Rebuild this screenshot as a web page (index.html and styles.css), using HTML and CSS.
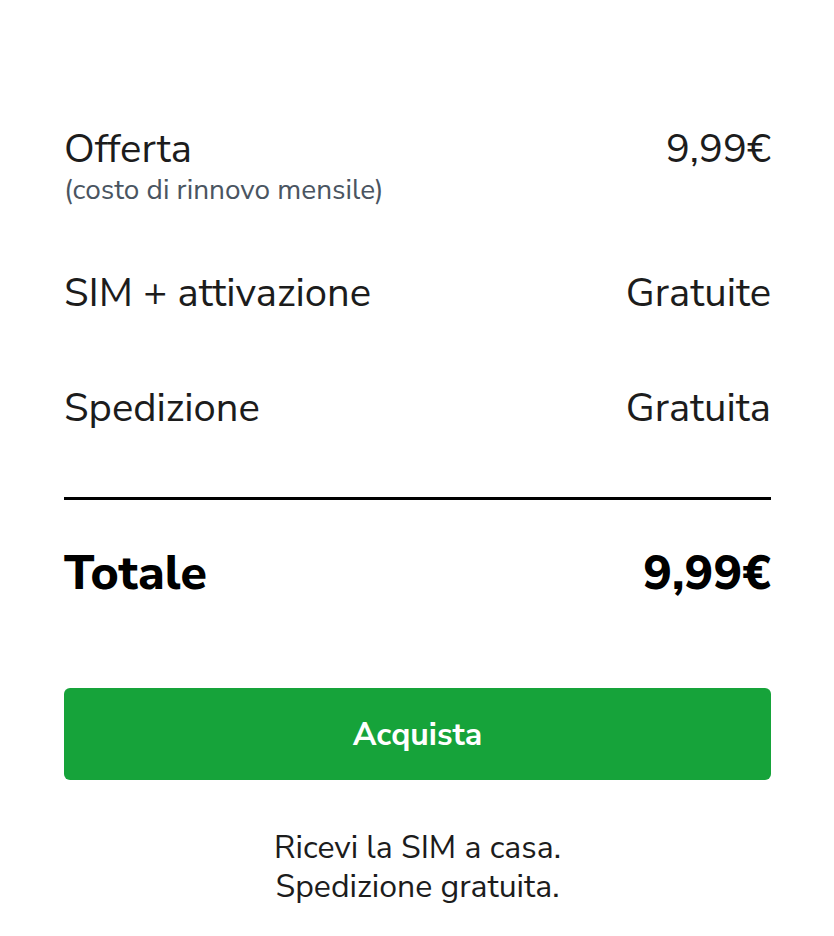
FILE: index.html
```html
<!DOCTYPE html>
<html lang="it">

<head>
    <meta charset="UTF-8">
    <title>Riepilogo offerta</title>
    <link rel="stylesheet" href="styles.css">
</head>

<body>
    <div class="summary">
        <div class="row row-offer">
            <div>
                <div class="label">Offerta</div>
                <div class="note">(costo di rinnovo mensile)</div>
            </div>
            <div class="value">9,99€</div>
        </div>

        <div class="row row-sim">
            <div class="label">SIM + attivazione</div>
            <div class="value">Gratuite</div>
        </div>

        <div class="row row-ship">
            <div class="label">Spedizione</div>
            <div class="value">Gratuita</div>
        </div>

        <div class="divider"></div>

        <div class="row total">
            <div class="label">Totale</div>
            <div class="value">9,99€</div>
        </div>

        <button class="buy">Acquista</button>

        <p class="footer">Ricevi la SIM a casa.<br>Spedizione gratuita.</p>
    </div>
</body>

</html>
```

FILE: styles.css
```css
body {
    font-family: "Nunito Sans", Lato, "Open Sans", sans-serif;
    margin: 0;
    background: white;
    color: #1c1c1c;
}

.summary {
    padding: 125px 63px 0 64px;
}

.row {
    display: flex;
    justify-content: space-between;
    align-items: flex-start;
}

.label,
.value {
    font-size: 40px;
    line-height: 48px;
}

.note {
    font-size: 28px;
    line-height: 34px;
    color: #4a5561;
}

.row-sim {
    margin-top: 62px;
}

.row-ship {
    margin-top: 67px;
}

.divider {
    height: 3px;
    background: black;
    margin-top: 65px;
}

.total {
    margin-top: 45px;
}

.total .label,
.total .value {
    font-size: 48px;
    line-height: 56px;
    font-weight: 800;
    color: black;
}

.buy {
    display: block;
    width: 100%;
    height: 92px;
    margin-top: 87px;
    border: none;
    border-radius: 6px;
    background-color: #16a33a;
    color: white;
    font-family: inherit;
    font-size: 32px;
    font-weight: 700;
    cursor: pointer;
}

.footer {
    margin: 48px 0 0;
    text-align: center;
    font-size: 32px;
    line-height: 39px;
}
```
